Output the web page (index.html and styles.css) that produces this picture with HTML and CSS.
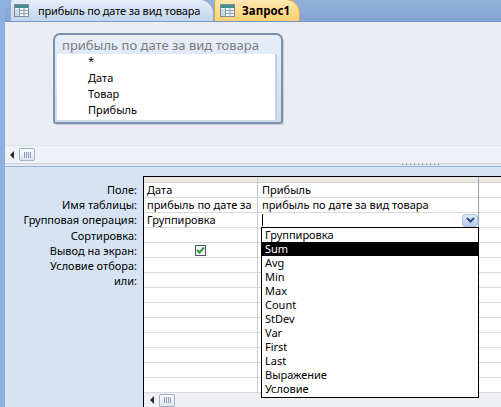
FILE: index.html
```html
<!DOCTYPE html>
<html>
<head>
<meta charset="utf-8">
<link rel="stylesheet" href="styles.css">
</head>
<body>
<div class="window">
  <div class="tabbar">
    <div class="tab tab-doc">
      <svg class="ticon" width="15" height="13" viewBox="0 0 15 13"><rect x="0.5" y="0.5" width="14" height="12" fill="#f4f6f8" stroke="#7d8a99"/><rect x="1" y="1" width="13" height="3" fill="#3f8f8a"/><path d="M1 6.5h13M1 9.5h13M5.5 4v8M10 4v8" stroke="#8aa0b8"/><rect x="1" y="5" width="4" height="7" fill="#c9dbe9"/></svg>
      <span>прибыль по дате за вид товара</span>
    </div>
    <div class="tab tab-active">
      <svg class="ticon" width="15" height="13" viewBox="0 0 15 13"><rect x="0.5" y="0.5" width="14" height="12" fill="#f4f6f8" stroke="#7d8a99"/><rect x="1" y="1" width="13" height="3" fill="#3f8f8a"/><path d="M1 6.5h13M1 9.5h13M5.5 4v8M10 4v8" stroke="#8aa0b8"/><rect x="1" y="5" width="4" height="7" fill="#c9dbe9"/></svg>
      <span>Запрос1</span>
    </div>
  </div>
  <div class="upper">
    <div class="tablebox">
      <div class="tb-title">прибыль по дате за вид товара</div>
      <div class="tb-list">
        <div>*</div>
        <div>Дата</div>
        <div>Товар</div>
        <div>Прибыль</div>
      </div>
    </div>
  </div>
  <div class="hscroll">
    <span class="arrow"></span>
    <span class="thumb"><i></i><i></i><i></i><i></i></span>
  </div>
  <div class="splitter"><span class="grip"></span></div>
  <div class="lower">
    <div class="labels">
      <div>Поле:</div>
      <div>Имя таблицы:</div>
      <div>Групповая операция:</div>
      <div>Сортировка:</div>
      <div>Вывод на экран:</div>
      <div>Условие отбора:</div>
      <div>или:</div>
    </div>
    <div class="gridwrap">
      <div class="grid">
        <div class="col c1">
          <div class="hdr"></div>
          <div class="cell">Дата</div>
          <div class="cell"><span class="clip">прибыль по дате за вид товара</span></div>
          <div class="cell">Группировка</div>
          <div class="cell"></div>
          <div class="cell center"><span class="check"><svg width="9" height="8" viewBox="0 0 9 8"><path d="M1 4l2.5 2.5L8 1.5" fill="none" stroke="#2e9a2e" stroke-width="2"/></svg></span></div>
          <div class="cell"></div><div class="cell"></div><div class="cell"></div><div class="cell"></div><div class="cell"></div><div class="cell"></div><div class="cell"></div><div class="cell"></div><div class="cell"></div>
        </div>
        <div class="col c2">
          <div class="hdr"></div>
          <div class="cell">Прибыль</div>
          <div class="cell">прибыль по дате за вид товара</div>
          <div class="cell combo"><span class="caret"></span><span class="cbtn"><svg width="9" height="6" viewBox="0 0 9 6"><path d="M1 1l3.5 3.5L8 1" fill="none" stroke="#2b4c86" stroke-width="2"/></svg></span></div>
          <div class="cell"></div><div class="cell"></div><div class="cell"></div><div class="cell"></div><div class="cell"></div><div class="cell"></div><div class="cell"></div><div class="cell"></div><div class="cell"></div><div class="cell"></div><div class="cell"></div>
        </div>
        <div class="col c3">
          <div class="hdr"></div>
          <div class="cell"></div><div class="cell"></div><div class="cell"></div><div class="cell"></div><div class="cell"></div><div class="cell"></div><div class="cell"></div><div class="cell"></div><div class="cell"></div><div class="cell"></div><div class="cell"></div><div class="cell"></div><div class="cell"></div><div class="cell"></div>
        </div>
      </div>
      <div class="gscroll">
        <span class="arrow"></span>
        <span class="thumb"><i></i><i></i><i></i><i></i></span>
      </div>
      <ul class="dropdown">
        <li>Группировка</li>
        <li class="sel">Sum</li>
        <li>Avg</li>
        <li>Min</li>
        <li>Max</li>
        <li>Count</li>
        <li>StDev</li>
        <li>Var</li>
        <li>First</li>
        <li>Last</li>
        <li>Выражение</li>
        <li>Условие</li>
      </ul>
    </div>
  </div>
</div>
</body>
</html>
```
FILE: styles.css
```css
* { box-sizing: border-box; }
html, body { margin: 0; padding: 0; }
body {
  width: 501px; height: 407px; overflow: hidden;
  font-family: "Noto Sans", "Open Sans", sans-serif;
  font-size: 11px; color: #000;
}
.window {
  width: 501px; height: 407px;
  display: flex; flex-direction: column;
  border-left: 5px solid #8db0e0;
  box-shadow: inset 1px 0 0 #6e93c9;
  background: #eceef2;
}
.tabbar {
  height: 22px; flex: none;
  background: linear-gradient(#93b1dc, #84a4d3);
  display: flex; align-items: flex-end;
  padding-left: 5px;
  border-bottom: 1px solid #7597c8;
}
.tab {
  height: 22px;
  display: flex; align-items: center;
  border: 1px solid #8ea8cf; border-bottom: none;
  border-radius: 3px 14px 0 0;
  white-space: nowrap;
}
.tab-doc {
  width: 204px;
  background: linear-gradient(#e4ecf7, #c3d5ee);
  font-size: 11px; letter-spacing: -0.15px;
  padding-left: 3px; gap: 9px;
}
.tab-active {
  width: 86px;
  background: linear-gradient(#ffe8b0, #ffcf70);
  border-color: #d8a850;
  font-weight: bold; font-size: 11.5px;
  gap: 7px; padding-left: 5px;
}
.ticon { flex: none; }
.upper {
  height: 123px; flex: none;
  background: #eaedf1;
  padding: 11px 0 0 48px;
}
.tablebox {
  width: 230px; height: 91px;
  border: 2px solid #7d90ae;
  border-radius: 7px 7px 3px 3px;
  background: linear-gradient(#e6eef9, #cfdcef);
  display: flex; flex-direction: column;
  box-shadow: 1px 1px 0 #c4ccd8;
}
.tb-title {
  height: 19px; flex: none;
  padding-left: 7px;
  font-size: 13px; line-height: 20px; color: #7e7e7e;
  white-space: nowrap; overflow: hidden;
}
.tb-list {
  flex: 1;
  margin: 0 4px 2px 2px;
  background: #fff;
  border-right: 2px solid #bcd0ea;
  padding-left: 31px;
}
.tb-list div { height: 16px; line-height: 16px; }
.tb-list div:first-child { line-height: 14px; }
.hscroll {
  height: 18px; flex: none;
  background: #eef1f5;
  border-top: 1px solid #dde3ea;
  display: flex; align-items: center;
  padding-left: 5px; gap: 5px;
}
.arrow {
  width: 0; height: 0;
  border-top: 4px solid transparent; border-bottom: 4px solid transparent;
  border-right: 4px solid #2a2a2a;
}
.thumb {
  width: 16px; height: 13px;
  border: 1px solid #9fb0c6; border-radius: 2px;
  background: linear-gradient(#fafbfd, #dde5ef);
  display: flex; align-items: center; justify-content: center; gap: 1px;
}
.thumb i { width: 1px; height: 6px; background: #8c9db5; }
.splitter {
  height: 4px; flex: none;
  background: #e4e8ee;
  border-top: 1px solid #cdd5df;
  border-bottom: 1px solid #98b4dc;
  position: relative;
}
.grip {
  position: absolute; left: 397px; top: 0;
  width: 38px; height: 1px;
  background: repeating-linear-gradient(90deg, #6d7c93 0 1px, transparent 1px 4px);
}
.lower {
  flex: 1;
  display: flex;
  background: #d5e3f2;
}
.labels {
  width: 138px; flex: none;
  padding-top: 15px;
  text-align: right; padding-right: 6px;
}
.labels div { height: 15.2px; line-height: 15px; }
.gridwrap {
  flex: 1;
  margin-top: 9px;
  border-left: 1px solid #000;
  border-top: 1px solid #000;
  background: #fff;
  display: flex; flex-direction: column;
  position: relative;
}
.grid { flex: 1; display: flex; overflow: hidden; }
.col { flex: none; overflow: hidden; }
.c1 { width: 114px; border-right: 1px solid #c2c9d2; }
.c2 { width: 221px; border-right: 1px solid #8fa3bf; }
.c3 { flex: 1; }
.hdr { height: 6px; background: #ebe9e2; border-bottom: 1px solid #d4d2cc; }
.cell {
  height: 15px; line-height: 14px;
  padding-left: 3px;
  border-bottom: 1px solid #d9d9d9;
  white-space: nowrap; overflow: hidden;
}
.clip { display: block; width: 108px; overflow: hidden; }
.c2 .cell { padding-left: 4px; }
.center { display: flex; justify-content: center; align-items: center; padding-left: 0; }
.check {
  width: 11px; height: 11px;
  border: 1px solid #4a5868;
  background: #f3f6f9;
  display: flex; align-items: center; justify-content: center;
}
.combo { display: flex; align-items: center; justify-content: space-between; padding-right: 0; }
.caret { width: 1px; height: 12px; background: #000; }
.cbtn {
  width: 16px; height: 13px;
  border-radius: 3px;
  background: linear-gradient(#dfe9f7, #b7cdea);
  border: 1px solid #b0c4de;
  display: flex; align-items: center; justify-content: center;
}
.gscroll {
  height: 14px; flex: none;
  background: #eef0f3;
  display: flex; align-items: center;
  padding-left: 6px; gap: 5px;
}
.dropdown {
  position: absolute; left: 117px; top: 50px;
  width: 218px; height: 171px;
  margin: 0; padding: 0; list-style: none;
  background: #fff;
  border: 1px solid #000;
}
.dropdown li {
  height: 14px; line-height: 14px;
  padding-left: 3px;
  margin: 0;
}
.dropdown li.sel { background: #000; color: #fff; }
```
